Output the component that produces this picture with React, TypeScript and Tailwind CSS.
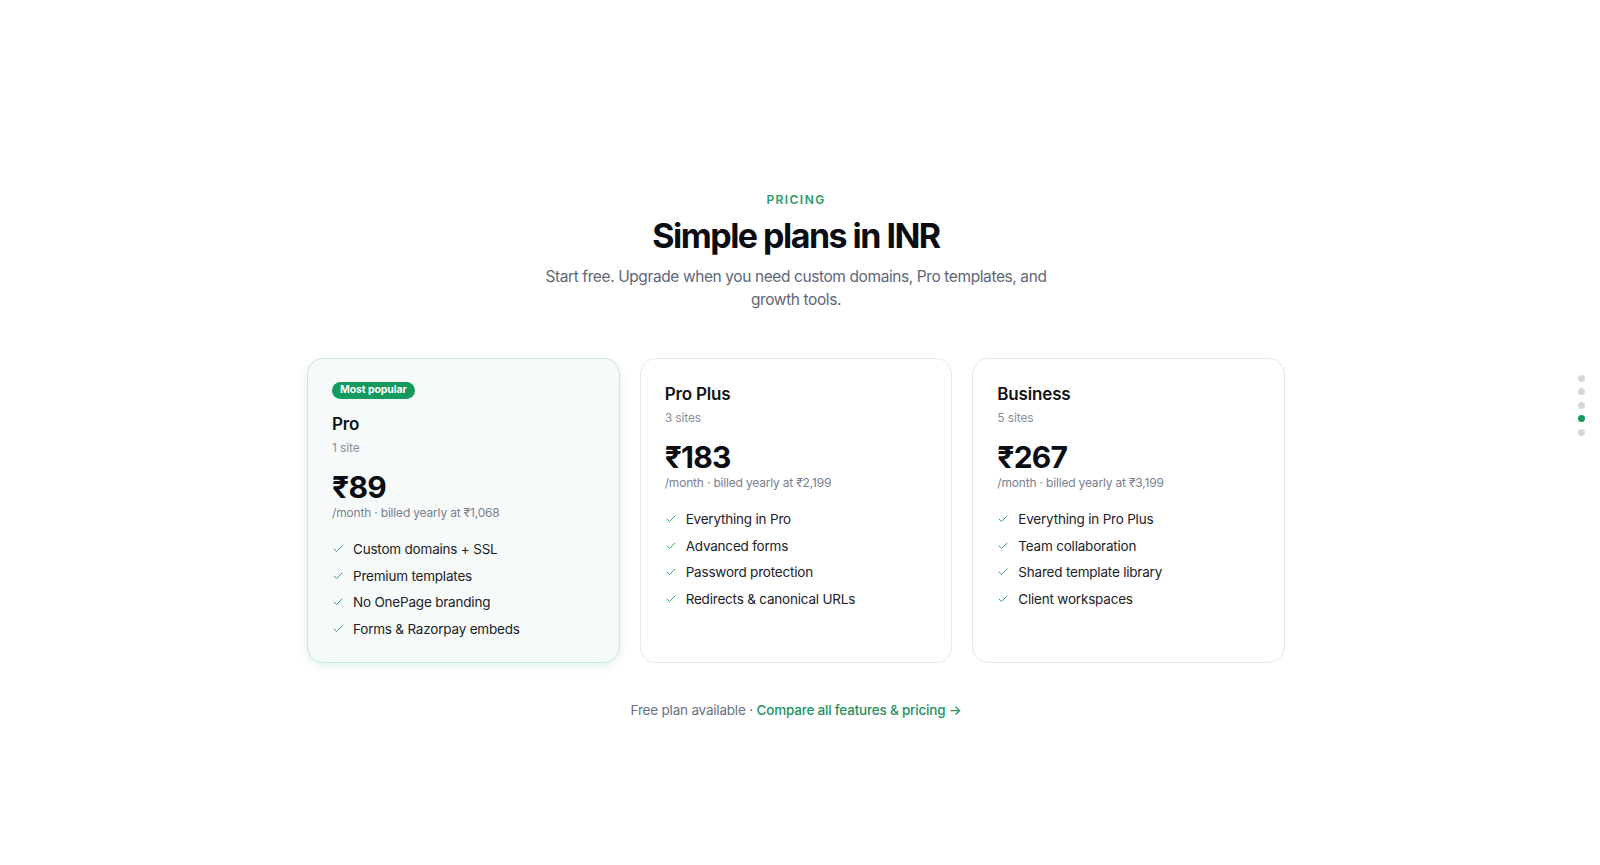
import React from "react";

type Plan = {
  name: string;
  sites: string;
  price: string;
  billed: string;
  features: string[];
  popular?: boolean;
};

const plans: Plan[] = [
  {
    name: "Pro",
    sites: "1 site",
    price: "₹89",
    billed: "/month · billed yearly at ₹1,068",
    features: ["Custom domains + SSL", "Premium templates", "No OnePage branding", "Forms & Razorpay embeds"],
    popular: true,
  },
  {
    name: "Pro Plus",
    sites: "3 sites",
    price: "₹183",
    billed: "/month · billed yearly at ₹2,199",
    features: ["Everything in Pro", "Advanced forms", "Password protection", "Redirects & canonical URLs"],
  },
  {
    name: "Business",
    sites: "5 sites",
    price: "₹267",
    billed: "/month · billed yearly at ₹3,199",
    features: ["Everything in Pro Plus", "Team collaboration", "Shared template library", "Client workspaces"],
  },
];

function CheckIcon() {
  return (
    <svg width="12" height="12" viewBox="0 0 24 24" fill="none" stroke="#3ba27a" strokeWidth="2" strokeLinecap="round" strokeLinejoin="round" className="shrink-0">
      <path d="M20 6 9 17l-5-5" />
    </svg>
  );
}

function Card({ plan }: { plan: Plan }) {
  return (
    <div
      className={
        plan.popular
          ? "rounded-2xl border border-[#bfeddb] bg-[#f6fbf9] px-6 pt-6 pb-[23px] shadow-[0_3px_10px_rgba(16,150,100,0.12)]"
          : "rounded-2xl border border-[#e7e8ea] bg-white px-6 pt-6 pb-[23px]"
      }
    >
      {plan.popular && (
        <div className="mb-[14px] -mt-[1px] flex">
          <span className="flex h-[17px] items-center rounded-full bg-[#129a5f] px-[8px] text-[10.5px] font-bold leading-none tracking-[-0.01em] text-white">
            Most popular
          </span>
        </div>
      )}
      <div className="text-[17px] font-semibold leading-[22px] tracking-[-0.01em] text-[#111318]">{plan.name}</div>
      <div className="mt-[5px] text-[12px] leading-4 tracking-[-0.01em] text-[#8a8f99]">{plan.sites}</div>
      <div className="mt-[13px] text-[30px] font-bold leading-9 tracking-tight text-[#0b0d12]">{plan.price}</div>
      <div className="text-[12px] leading-4 tracking-[-0.015em] text-[#7a8090]">{plan.billed}</div>
      <ul className="mt-[18px] flex flex-col gap-[6.6px]">
        {plan.features.map((f) => (
          <li key={f} className="flex items-center gap-[9px] text-[13.5px] leading-5 tracking-[-0.015em] text-[#1d2128]">
            <CheckIcon />
            <span>{f}</span>
          </li>
        ))}
      </ul>
    </div>
  );
}

export default function App() {
  return (
    <div className="relative min-h-[865px] bg-white pr-2" style={{ fontFamily: "Inter, 'Noto Sans', sans-serif" }}>
      <div className="flex flex-col items-center pt-[192px]">
        <div className="text-[12px] font-semibold leading-4 tracking-[0.12em] text-[#2a9a68]">PRICING</div>
        <h1 className="mt-2 text-[34px] font-bold leading-10 tracking-[-0.045em] text-[#0b0d14]">Simple plans in INR</h1>
        <p className="mt-[10px] max-w-[512px] text-center text-[15.5px] leading-[22.5px] tracking-[-0.026em] text-[#5e6778]">
          Start free. Upgrade when you need custom domains, Pro templates, and growth tools.
        </p>
        <div className="mt-[47px] grid w-[978px] grid-cols-3 gap-5">
          {plans.map((p) => (
            <Card key={p.name} plan={p} />
          ))}
        </div>
        <div className="mt-[37px] text-[13.5px] leading-5 tracking-[-0.015em] text-[#687083]">
          Free plan available ·{" "}
          <a href="#" className="font-medium text-[#1e9262]">
            Compare all features &amp; pricing →
          </a>
        </div>
      </div>
      <div className="absolute right-[15.5px] top-[374.5px] flex flex-col gap-[6.5px]">
        <span className="h-[7px] w-[7px] rounded-full bg-[#d4d6da]" />
        <span className="h-[7px] w-[7px] rounded-full bg-[#d4d6da]" />
        <span className="h-[7px] w-[7px] rounded-full bg-[#d4d6da]" />
        <span className="h-[7px] w-[7px] rounded-full bg-[#129a5f]" />
        <span className="h-[7px] w-[7px] rounded-full bg-[#d4d6da]" />
      </div>
    </div>
  );
}
